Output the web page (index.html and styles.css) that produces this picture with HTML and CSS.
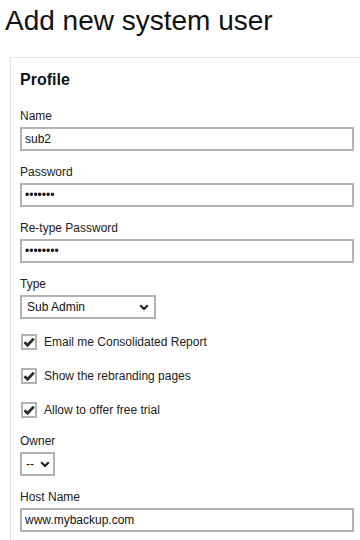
FILE: index.html
```html
<!DOCTYPE html>
<html lang="en">
  <head>
    <meta charset="utf-8">
    <title>Add new system user</title>
    <link rel="stylesheet" href="styles.css">
  </head>
  <body>
    <h1>Add new system user</h1>
    <form class="panel">
      <h2>Profile</h2>
      <div class="field">
        <label for="name">Name</label>
        <input id="name" type="text" value="sub2">
      </div>
      <div class="field">
        <label for="pass">Password</label>
        <input id="pass" type="password" value="1234567">
      </div>
      <div class="field">
        <label for="pass2">Re-type Password</label>
        <input id="pass2" type="password" value="12345678">
      </div>
      <div class="field">
        <label for="type">Type</label>
        <span class="select type">
          <select id="type">
            <option>Sub Admin</option>
            <option>Admin</option>
          </select>
          <svg class="chevron" viewBox="0 0 10 7" width="10" height="7"><path d="M1.2 1.2 5 5 8.8 1.2" fill="none" stroke="#222" stroke-width="2.2"/></svg>
        </span>
      </div>
      <label class="check first">
        <input type="checkbox" checked>
        <svg class="tick" viewBox="0 0 16 16" width="16" height="16"><path d="M3.5 8.2 6.6 11.3 12.8 4.6" fill="none" stroke="#2b2b2b" stroke-width="2.8"/></svg>
        Email me Consolidated Report
      </label>
      <label class="check">
        <input type="checkbox" checked>
        <svg class="tick" viewBox="0 0 16 16" width="16" height="16"><path d="M3.5 8.2 6.6 11.3 12.8 4.6" fill="none" stroke="#2b2b2b" stroke-width="2.8"/></svg>
        Show the rebranding pages
      </label>
      <label class="check">
        <input type="checkbox" checked>
        <svg class="tick" viewBox="0 0 16 16" width="16" height="16"><path d="M3.5 8.2 6.6 11.3 12.8 4.6" fill="none" stroke="#2b2b2b" stroke-width="2.8"/></svg>
        Allow to offer free trial
      </label>
      <div class="field">
        <label for="owner">Owner</label>
        <span class="select owner">
          <select id="owner">
            <option>--</option>
          </select>
          <svg class="chevron" viewBox="0 0 10 7" width="10" height="7"><path d="M1.2 1.2 5 5 8.8 1.2" fill="none" stroke="#222" stroke-width="2.2"/></svg>
        </span>
      </div>
      <div class="field">
        <label for="host">Host Name</label>
        <input id="host" type="text" value="www.mybackup.com">
      </div>
    </form>
  </body>
</html>
```

FILE: styles.css
```css
html {
  overflow: hidden;
}
body {
  margin: 0;
  padding: 0 0 0 5px;
  background-color: #fff;
  color: #222;
  font-family: "Liberation Sans", Arial, sans-serif;
  font-size: 12px;
}
h1 {
  margin: 5px 0 20px;
  font-size: 28px;
  font-weight: normal;
  line-height: 32px;
  color: #111;
}
.panel {
  display: flex;
  flex-direction: column;
  gap: 14px;
  margin-left: 5px;
  padding: 13px 6px 12px 9px;
  border-top: solid 1px #e4e4e4;
  border-left: solid 1px #e4e4e4;
  & h2 {
    margin: 0 0 6px;
    font-size: 16px;
    line-height: 18px;
    color: #111;
  }
}
.field {
  display: flex;
  flex-direction: column;
  align-items: flex-start;
  gap: 4px;
  & > label {
    line-height: 14px;
  }
  & > input {
    box-sizing: border-box;
    width: 100%;
    height: 24px;
    margin: 0;
    padding: 0 3px;
    border: solid 2px #b3b3b3;
    border-radius: 0;
    outline: none;
    font-family: inherit;
    font-size: 12px;
    color: #111;
  }
}
.select {
  position: relative;
  display: inline-flex;
  & > select {
    appearance: none;
    box-sizing: border-box;
    height: 24px;
    margin: 0;
    padding: 0 0 0 5px;
    border: solid 2px #b3b3b3;
    border-radius: 0;
    background-color: #fff;
    font-family: inherit;
    font-size: 12px;
    color: #111;
  }
  & > .chevron {
    position: absolute;
    top: 9px;
    pointer-events: none;
  }
  &.type > select {
    width: 136px;
  }
  &.type > .chevron {
    left: 119px;
  }
  &.owner > select {
    width: 35px;
    padding-left: 4px;
  }
  &.owner > .chevron {
    left: 20px;
  }
}
.check {
  position: relative;
  display: flex;
  align-items: center;
  gap: 7px;
  height: 20px;
  padding-left: 1px;
  &.first {
    margin-top: -1px;
  }
  & > input {
    appearance: none;
    box-sizing: border-box;
    width: 16px;
    height: 16px;
    margin: 0;
    border: solid 2px #b3b3b3;
    background-color: #fff;
  }
  & > .tick {
    position: absolute;
    left: 1px;
    top: 2px;
    pointer-events: none;
  }
}
```
